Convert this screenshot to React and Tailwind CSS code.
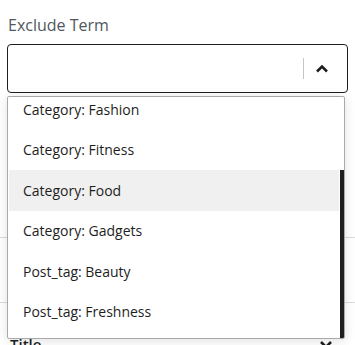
import React from "react";

const options = [
  "Category: Fashion",
  "Category: Fitness",
  "Category: Food",
  "Category: Gadgets",
  "Post_tag: Beauty",
  "Post_tag: Freshness",
];

const App = () => {
  return (
    <div
      className="relative w-[355px] h-[345px] overflow-hidden bg-white"
      style={{ fontFamily: "'Open Sans', 'Noto Sans', sans-serif" }}
    >
      <div className="px-[7px] pt-[14px]">
        <label className="block pl-px text-[16px] leading-[22px] text-[#50575e]">
          Exclude Term
        </label>
        <div className="mt-[8px] h-[49px] flex items-center justify-end rounded-[4px] border border-[#1e1e1e] bg-white">
          <span className="h-[21px] w-px bg-[#c3c4c7]"></span>
          <span className="ml-[11px] mr-[18px] flex items-center">
            <svg width="14" height="9" viewBox="0 0 14 9">
              <path d="M2 7.5 L7 2.5 L12 7.5" fill="none" stroke="#1e1e1e" strokeWidth="2.6" />
            </svg>
          </span>
        </div>
      </div>

      {/* panel content behind the open menu */}
      <div className="mt-[144px] border-t border-[#dcdcde]"></div>
      <div className="mt-[64px] border-t border-[#dcdcde]"></div>
      <div className="mt-[30px] px-[10px] flex items-center justify-between">
        <span className="text-[15px] font-semibold text-[#1e1e1e]">Title</span>
        <svg width="14" height="9" viewBox="0 0 14 9" className="mr-[12px]">
          <path d="M2 2 L7 7 L12 2" fill="none" stroke="#1e1e1e" strokeWidth="2.6" />
        </svg>
      </div>

      {/* open dropdown menu */}
      <div className="absolute left-[7px] top-[96px] w-[338px] h-[243px] overflow-hidden rounded-[2px] border border-[#a7aaad] bg-white shadow-[0_2px_12px_rgba(0,0,0,0.12)]">
        <ul className="-mt-[8px] pl-px pr-[5px]">
          {options.map((opt) => (
            <li
              key={opt}
              className={
                "h-[40.5px] flex items-center pl-[14px] text-[14px] text-[#1e1e1e] " +
                (opt === "Category: Food" ? "bg-[#f0f0f0]" : "")
              }
            >
              {opt}
            </li>
          ))}
        </ul>
        <div className="absolute right-0 top-[73px] bottom-0 w-[4px] bg-[#1e1e1e]"></div>
      </div>
    </div>
  );
};

export default App;
